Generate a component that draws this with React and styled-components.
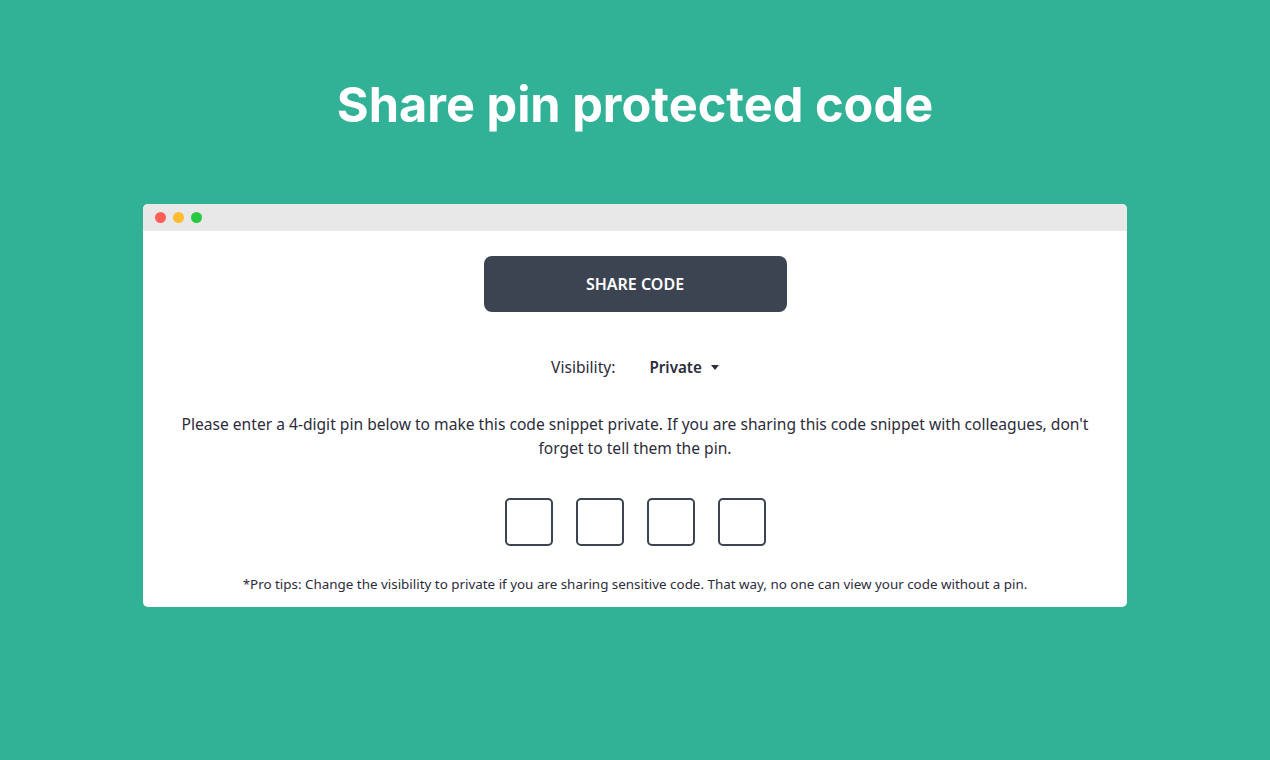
import React from "react";
import styled, { createGlobalStyle } from "styled-components";

const Global = createGlobalStyle`
  html, body { margin: 0; padding: 0; }
  body { background: #31b195; font-family: "Noto Sans", "Open Sans", sans-serif; }
`;

const Page = styled.div`
  width: 1270px;
  height: 760px;
  display: flex;
  flex-direction: column;
  align-items: center;
`;

const Title = styled.h1`
  margin: 75px 0 0;
  font-family: "Inter", "Open Sans", sans-serif;
  font-weight: 700;
  font-size: 48.7px;
  line-height: 60px;
  color: #ffffff;
`;

const Window = styled.div`
  margin-top: 69px;
  width: 984px;
  background: #ffffff;
  border-radius: 5px;
  overflow: hidden;
`;

const TitleBar = styled.div`
  height: 27px;
  background: #e8e8e8;
  display: flex;
  align-items: center;
  gap: 7px;
  padding-left: 12px;
`;

const Dot = styled.span`
  width: 11px;
  height: 11px;
  border-radius: 50%;
  background: ${(p) => p.$c};
`;

const Body = styled.div`
  display: flex;
  flex-direction: column;
  align-items: center;
  padding: 25px 30px 13px;
  color: #2c2c3a;
`;

const ShareButton = styled.button`
  width: 303px;
  height: 56px;
  border: none;
  border-radius: 8px;
  background: #3d4451;
  color: #ffffff;
  font-family: "Noto Sans", "Open Sans", sans-serif;
  font-weight: 600;
  font-size: 16px;
  cursor: pointer;
`;

const VisibilityRow = styled.div`
  margin-top: 44px;
  display: flex;
  align-items: center;
  font-size: 15.6px;
`;

const Label = styled.span`
  margin-right: 34px;
`;

const Select = styled.span`
  display: flex;
  align-items: center;
  gap: 9px;
  font-weight: 600;
  font-size: 15.2px;
`;

const Caret = styled.span`
  width: 0;
  height: 0;
  border-left: 4.5px solid transparent;
  border-right: 4.5px solid transparent;
  border-top: 5px solid #2c2c3a;
`;

const Paragraph = styled.p`
  margin: 34px 0 0;
  font-size: 15.6px;
  line-height: 24px;
  text-align: center;
`;

const PinRow = styled.div`
  margin-top: 38px;
  display: flex;
  gap: 23px;
`;

const PinBox = styled.input`
  width: 48px;
  height: 48px;
  box-sizing: border-box;
  border: 2px solid #3d4451;
  border-radius: 5px;
  text-align: center;
  font-size: 20px;
`;

const Tip = styled.p`
  margin: 28px 0 0;
  font-size: 13.4px;
  line-height: 20px;
`;

export default function App() {
  return (
    <Page>
      <Global />
      <Title>Share pin protected code</Title>
      <Window>
        <TitleBar>
          <Dot $c="#ff5f57" />
          <Dot $c="#febc2e" />
          <Dot $c="#28c840" />
        </TitleBar>
        <Body>
          <ShareButton>SHARE CODE</ShareButton>
          <VisibilityRow>
            <Label>Visibility:</Label>
            <Select>
              Private <Caret />
            </Select>
          </VisibilityRow>
          <Paragraph>
            Please enter a 4-digit pin below to make this code snippet private. If you are sharing this code snippet with colleagues, don't forget to tell them the pin.
          </Paragraph>
          <PinRow>
            {[0, 1, 2, 3].map((i) => (
              <PinBox key={i} maxLength={1} />
            ))}
          </PinRow>
          <Tip>
            *Pro tips: Change the visibility to private if you are sharing sensitive code. That way, no one can view your code without a pin.
          </Tip>
        </Body>
      </Window>
    </Page>
  );
}
